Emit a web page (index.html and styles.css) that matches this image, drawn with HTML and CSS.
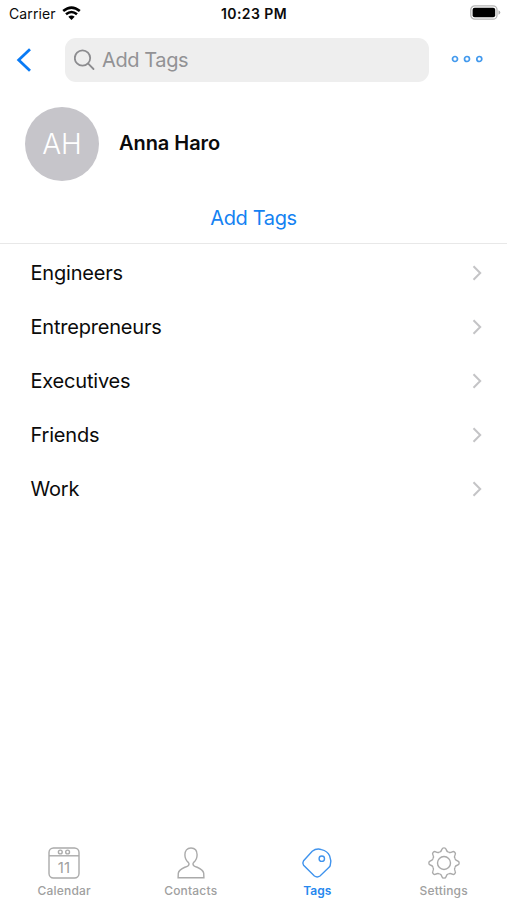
FILE: index.html
```html
<!DOCTYPE html>
<html lang="en">
<head>
<meta charset="utf-8">
<title>Add Tags</title>
<link rel="stylesheet" href="styles.css">
</head>
<body>
<div class="status">
  <div class="carrier"><span class="carrier-name">Carrier</span>
    <svg width="19" height="15" viewBox="0 0 19 15" fill="none" stroke="#000" stroke-width="2.6"><path d="M1.2 5.1Q9.5 -2 17.8 5.1"/><path d="M4 8.3Q9.5 3.7 15 8.3"/><path d="M6.3 10.8Q9.5 8.2 12.7 10.8L9.5 14Z" fill="#000" stroke="none"/></svg>
  </div>
  <span class="time">10:23 PM</span>
  <svg class="battery" width="31" height="16" viewBox="0 0 31 16"><rect x=".8" y=".8" width="26.2" height="13.4" rx="4" fill="#fff" stroke="#b5b5b5" stroke-width="1.3"/><rect x="2.6" y="2.7" width="22.6" height="9.6" rx="2" fill="#000"/><path d="M28.5 5.2Q30.3 6 30.3 7.5T28.5 9.8Z" fill="#aaa"/></svg>
</div>
<header class="nav">
  <svg class="back" width="16" height="24" viewBox="0 0 16 24" fill="none" stroke="#0a7bf5" stroke-width="2.8"><path d="M14 1.3L2.7 12L14 22.7"/></svg>
  <div class="search">
    <svg width="22" height="22" viewBox="0 0 22 22" fill="none" stroke="#8c8c8f" stroke-width="1.8" stroke-linecap="round"><circle cx="8.5" cy="9" r="7.7"/><path d="M14.2 14.7L19.5 20"/></svg>
    <span class="placeholder">Add Tags</span>
  </div>
  <svg class="more" width="32" height="8" viewBox="0 0 32 8" fill="none" stroke="#4299ed" stroke-width="1.7"><circle cx="4" cy="4" r="2.5"/><circle cx="16" cy="4" r="2.5"/><circle cx="28.3" cy="4" r="2.5"/></svg>
</header>
<section class="person">
  <div class="avatar"><span>AH</span></div>
  <span class="name">Anna Haro</span>
</section>
<div class="add"><span>Add Tags</span></div>
<ul class="list">
  <li><span>Engineers</span><svg class="chev" viewBox="0 0 10 16"><path d="M1.5 1.3L8.2 8L1.5 14.7"/></svg></li>
  <li><span>Entrepreneurs</span><svg class="chev" viewBox="0 0 10 16"><path d="M1.5 1.3L8.2 8L1.5 14.7"/></svg></li>
  <li><span>Executives</span><svg class="chev" viewBox="0 0 10 16"><path d="M1.5 1.3L8.2 8L1.5 14.7"/></svg></li>
  <li><span>Friends</span><svg class="chev" viewBox="0 0 10 16"><path d="M1.5 1.3L8.2 8L1.5 14.7"/></svg></li>
  <li><span>Work</span><svg class="chev" viewBox="0 0 10 16"><path d="M1.5 1.3L8.2 8L1.5 14.7"/></svg></li>
</ul>
<nav class="tabs">
  <div class="tab"><svg viewBox="0 0 34 34"><rect x="2" y="2" width="30" height="30" rx="4.5"/><path d="M2 9.8H32"/><circle cx="13.3" cy="6" r="1.9"/><circle cx="20.6" cy="6" r="1.9"/><text x="17" y="26.7" text-anchor="middle" class="day">11</text></svg><span>Calendar</span></div>
  <div class="tab"><svg viewBox="0 0 34 34"><path d="M17 2C13 2 10.9 4.8 10.9 8.8C10.9 12 12.3 14.8 14.3 16.4C15.4 17.4 15.2 19 14 19.8C10 22 5.2 22.5 4.3 27.2L4.1 31.8H29.9L29.7 27.2C28.8 22.5 24 22 20 19.8C18.8 19 18.6 17.4 19.7 16.4C21.7 14.8 23.1 12 23.1 8.8C23.1 4.8 21 2 17 2Z"/></svg><span>Contacts</span></div>
  <div class="tab active"><svg viewBox="0 0 34 34"><path d="M12.2 5.3Q16.5 2 21.5 3.6Q27.5 5 29.6 9.8Q31.6 14.5 30.2 19.5Q30 20.5 28.8 21.6L20 30Q17.2 31.9 14.4 30L3.6 19.3Q2.1 17 3.6 14.7Z"/><circle cx="21.8" cy="12.7" r="2.7"/></svg><span>Tags</span></div>
  <div class="tab"><svg viewBox="0 0 34 34"><defs><path id="tooth" d="M-4.5 -10.9C-2.6 -11.4 -2.4 -12.3 -2 -13.8C-1.6 -15.6 1.6 -15.6 2 -13.8C2.4 -12.3 2.6 -11.4 4.5 -10.9"/></defs><g transform="translate(17 17)"><use href="#tooth"/><use href="#tooth" transform="rotate(45)"/><use href="#tooth" transform="rotate(90)"/><use href="#tooth" transform="rotate(135)"/><use href="#tooth" transform="rotate(180)"/><use href="#tooth" transform="rotate(225)"/><use href="#tooth" transform="rotate(270)"/><use href="#tooth" transform="rotate(315)"/><circle r="6.5"/></g></svg><span>Settings</span></div>
</nav>
</body>
</html>
```
FILE: styles.css
```css
* { box-sizing: border-box; }
body { margin: 0; height: 900px; display: flex; flex-direction: column; background: #fff; color: #0b0b0b; font-family: Inter, "Liberation Sans", sans-serif; overflow: hidden; }
svg { display: block; flex: none; }
.status { height: 27px; display: grid; grid-template-columns: 1fr auto 1fr; align-items: center; padding: 0 6px 0 9px; font-size: 14px; }
.carrier { display: flex; align-items: center; gap: 6px; }
.carrier-name { font-size: 14px; letter-spacing: .1px; }
.carrier svg { margin-top: -1px; }
.time { font-weight: 600; letter-spacing: .4px; margin-right: 2px; }
.battery { justify-self: end; margin-top: -1px; }
.nav { height: 65px; display: flex; align-items: center; padding: 0 23px 0 16px; }
.search { width: 364px; height: 44px; margin: 0 22px 0 33px; padding-left: 9px; border-radius: 11px; background: #eee; display: flex; align-items: center; gap: 6px; color: #929295; font-size: 20px; letter-spacing: -.4px; }
.more { margin-top: -1px; }
.person { height: 103px; display: flex; align-items: center; gap: 20px; padding: 0 25px; }
.avatar { width: 74px; height: 74px; border-radius: 50%; background: #c6c5ca; color: #fff; display: flex; align-items: center; justify-content: center; font-size: 28px; font-weight: 300; }
.name { font-size: 20px; font-weight: 600; letter-spacing: -.05px; margin-top: -2px; }
.add { height: 49px; border-bottom: 1.5px solid #e8e8e8; display: flex; justify-content: center; padding-top: 10px; color: #1482f2; font-size: 20px; line-height: 26px; letter-spacing: -.35px; }
.list { list-style: none; margin: 1.5px 0 0; padding: 0; flex: 1; }
.list li { height: 54.2px; display: flex; align-items: center; justify-content: space-between; padding: 0 25px 0 30.5px; font-size: 20px; letter-spacing: -.2px; }
.chev { width: 10px; height: 16px; fill: none; stroke: #c4c4c6; stroke-width: 2; }
.tabs { height: 58px; display: grid; grid-template-columns: repeat(4, 1fr); padding-left: 1px; font-size: 12px; font-weight: 500; color: #a0a0a0; letter-spacing: .2px; }
.tab { display: flex; flex-direction: column; align-items: center; gap: 3px; padding-top: 4px; }
.tab svg { width: 34px; height: 34px; fill: none; stroke: #aaa; stroke-width: 1.4; }
.tab span { line-height: 16px; }
.day { fill: #a0a0a0; stroke: none; font-size: 15px; font-weight: 400; }
.tab.active { color: #2688ee; font-weight: 600; letter-spacing: 0; }
.tab.active svg { stroke: #3f93ed; }
```
